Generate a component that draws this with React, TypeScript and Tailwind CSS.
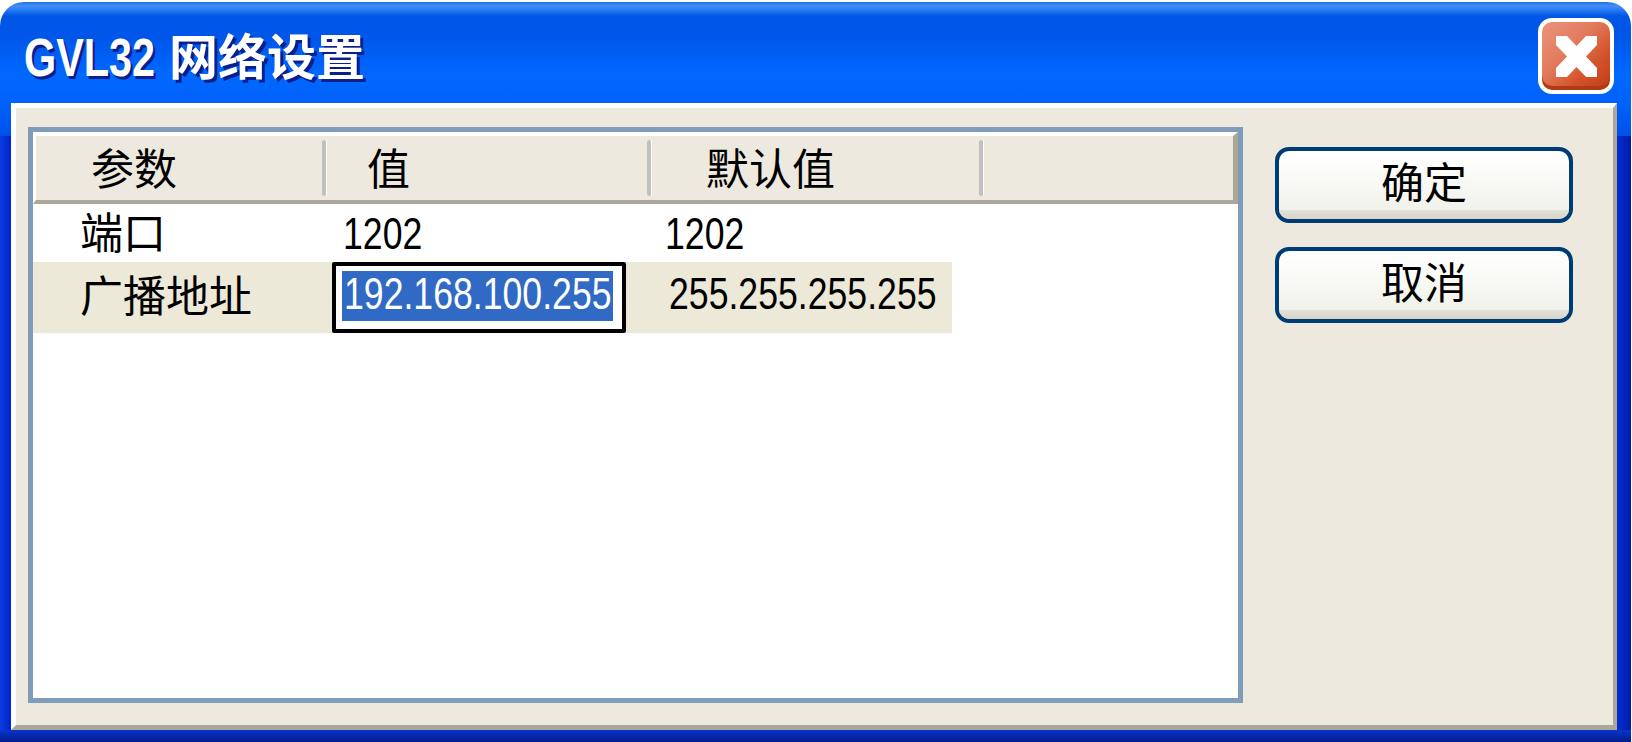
const cjk = "text-[43px] leading-none text-black";
const num = "inline-block origin-left scale-x-[.81] text-[44px] leading-none whitespace-nowrap";

function HeaderCell({ width, pad, label }: { width: string; pad: string; label: string }) {
  return (
    <div className={`flex h-full shrink-0 items-center justify-between ${width}`}>
      <span className={`${cjk} ${pad}`}>{label}</span>
      <span className="h-[56px] w-[5px] rounded-sm border-r border-white bg-[#c0c0c0]" />
    </div>
  );
}

function ActionButton({ label }: { label: string }) {
  return (
    <button className="flex h-[76px] w-[298px] flex-col overflow-hidden rounded-[14px] border-4 border-[#003c74] bg-[linear-gradient(180deg,#ffffff,#fbfbf8_30%,#f2f2ec_85%)]">
      <span className={`flex flex-1 items-center justify-center pt-[8px] ${cjk}`}>{label}</span>
      <span className="h-[9px] bg-[linear-gradient(180deg,#e4e1d8,#d8d4ca)]" />
    </button>
  );
}

export default function App() {
  return (
    <div className="h-[742px] w-[1632px] overflow-hidden bg-white pt-[2px] font-['Liberation_Sans','Noto_Sans_CJK_SC',sans-serif]">
      <div className="flex h-[740px] w-[1631px] flex-col overflow-hidden rounded-t-[24px]">
        {/* Title bar */}
        <div className="flex h-[101px] shrink-0 items-start justify-between bg-[linear-gradient(180deg,#1f6fe8_0px,#3f90f8_4px,#2a7af0_8px,#0056e6_14px,#0056ea_36px,#0068ff_72px,#0062fa_101px)] pl-[24px] pr-[17px]">
          <div className="mt-[27px] flex items-center font-bold text-white [text-shadow:3px_3px_0_#0a1f8c]">
            <span className="inline-block w-[145px] origin-left scale-x-[.78] text-[53px] leading-[58px]">GVL32</span>
            <span className="text-[49px] leading-[58px]">网络设置</span>
          </div>
          <button className="mt-[16px] flex h-[76px] w-[76px] items-center justify-center rounded-[14px] border-4 border-white bg-[linear-gradient(135deg,#ea9580,#e27a5c_40%,#d2532a_70%,#c03c12)] shadow-[inset_0_-4px_0_#b03a14]">
            <svg width="41" height="41" viewBox="0 0 41 41">
              <polygon fill="#fff" points="0,0 11,0 20.5,10 30,0 41,0 41,9 30,20.5 41,32 41,41 30,41 20.5,31 11,41 0,41 0,32 11,20.5 0,9" />
            </svg>
          </button>
        </div>

        <div className="flex flex-1">
          {/* Left frame */}
          <div className="flex w-[11px] flex-col">
            <div className="h-[33px] bg-[linear-gradient(180deg,#0062fa,#0050e8)]" />
            <div className="flex-1 bg-[linear-gradient(90deg,#0a3ee0,#0022cc)]" />
          </div>

          {/* Dialog panel */}
          <div className="flex flex-1 items-start border-t-[5px] border-r-[4px] border-b-[5px] border-l-[5px] border-t-white border-r-[#aca899] border-b-[#aca899] border-l-white bg-[#ede9de] pt-[19px] pl-[12px]">
            <div className="flex h-[576px] w-[1215px] flex-col border-[5px] border-[#7f9db9] bg-white">
              <div className="flex h-[72px] items-center border-t-4 border-r-[5px] border-b-4 border-l-[3px] border-t-white border-r-[#aca899] border-b-[#aca899] border-l-white bg-[#ede9de]">
                <HeaderCell width="w-[291px]" pad="pt-[5px] pl-[55px]" label="参数" />
                <HeaderCell width="w-[325px]" pad="pt-[5px] pl-[40px]" label="值" />
                <HeaderCell width="w-[332px]" pad="pt-[5px] pl-[54px]" label="默认值" />
              </div>

              <div className="flex h-[58px] items-center">
                <div className={`w-[299px] shrink-0 pt-[3px] pl-[47px] ${cjk}`}>端口</div>
                <div className="w-[333px] shrink-0 pt-[2px] pl-[11px]"><span className={num}>1202</span></div>
                <div className="pt-[2px]"><span className={num}>1202</span></div>
              </div>

              <div className="flex h-[71px] w-[919px] items-center bg-[#ece9d8]">
                <div className={`w-[299px] shrink-0 pl-[47px] ${cjk}`}>广播地址</div>
                <div className="h-full w-[294px] shrink-0 rounded-[2px] border-4 border-black bg-white pt-[5px] pl-[6px]">
                  <div className="h-[50px] w-[271px] bg-[#316ac5] pt-[1px] pl-[2px] text-white">
                    <span className={num}>192.168.100.255</span>
                  </div>
                </div>
                <div className="pb-[7px] pl-[43px]"><span className={num}>255.255.255.255</span></div>
              </div>
            </div>

            <div className="ml-[32px] flex flex-col gap-[24px] pt-[20px]">
              <ActionButton label="确定" />
              <ActionButton label="取消" />
            </div>
          </div>

          {/* Right frame */}
          <div className="flex w-[14px] flex-col">
            <div className="h-[33px] bg-[linear-gradient(180deg,#0062fa,#0050e8)]" />
            <div className="flex-1 bg-[linear-gradient(90deg,#0030d0,#001aa8)]" />
          </div>
        </div>

        {/* Bottom frame */}
        <div className="h-[12px] shrink-0 bg-[linear-gradient(180deg,#0a34cc,#001c88)]" />
      </div>
    </div>
  );
}
